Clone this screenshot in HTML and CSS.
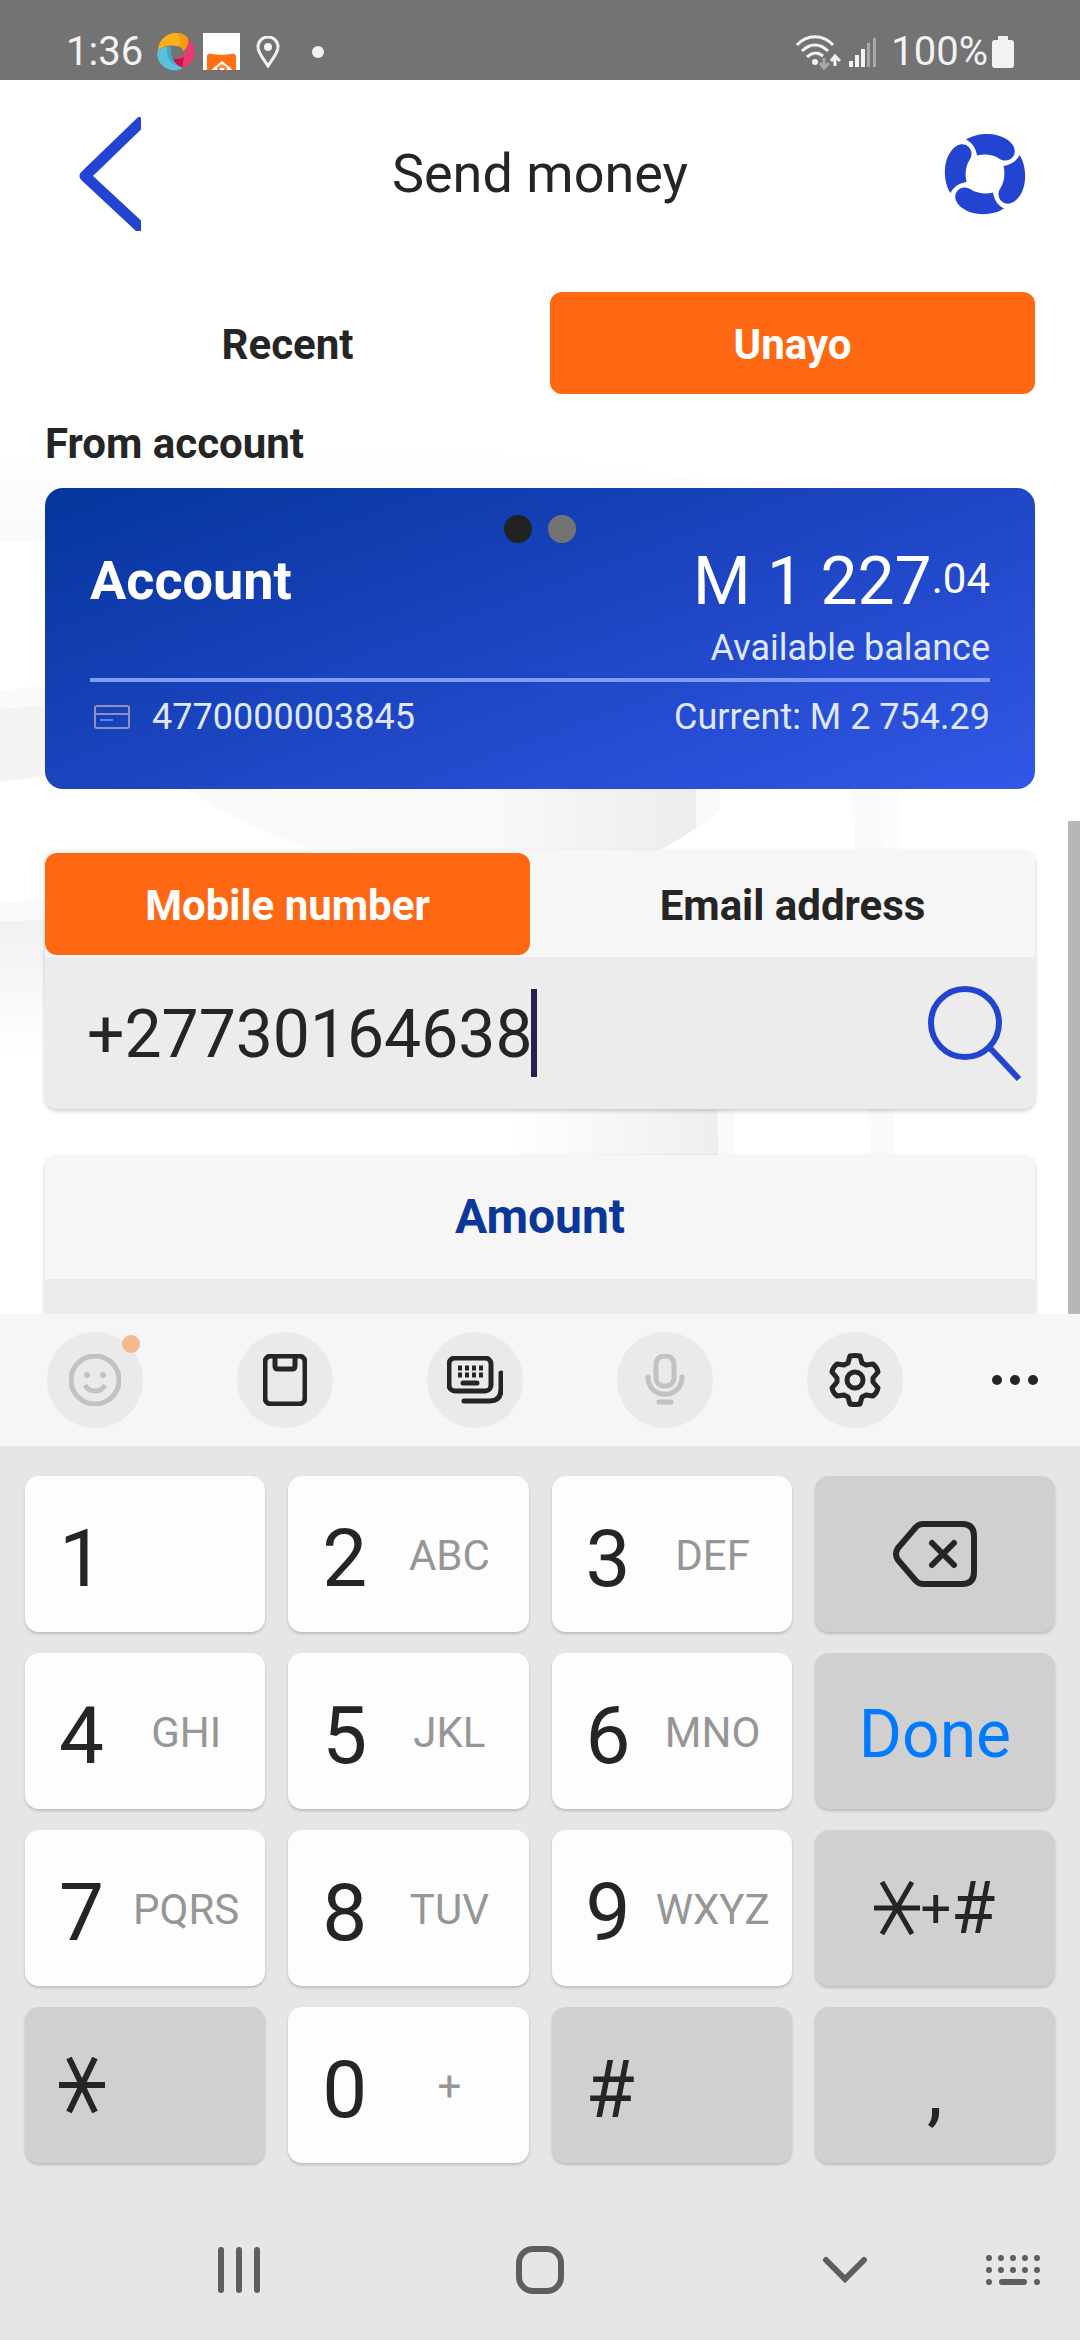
FILE: index.html
```html
<!DOCTYPE html>
<html lang="en">
<head>
<meta charset="utf-8">
<meta name="viewport" content="width=device-width, initial-scale=1">
<title>Send money</title>
<link rel="stylesheet" href="styles.css">
</head>
<body>
<div class="status">
  <div class="status-group">
    <span>1:36</span>
    <svg class="status-ring" width="38" height="38" viewBox="0 0 38 38" aria-hidden="true">
      <path d="M1 17C2 6 10 0 19 0c6 0 11 3 12 6 1 4-1 9-5 12-4-6-14-8-25-1z" fill="#fbb018"/>
      <path d="M20 0c6 0 11 3 11 7s-1 8-5 11l-4-4c2-5 1-10-2-14z" fill="#f99a0c"/>
      <path d="M32 6c5 4 7 12 5 18-3 8-10 12-14 11-6-1-9-6-9-9 9 2 17-6 18-20z" fill="#ea3a72"/>
      <path d="M14 25c4 2 9 1 13-1l-2 11c-6 1-11-5-11-10z" fill="#c8133f"/>
      <path d="M1 17c4-3 9-4 13-3-1 9 2 17 12 21-6 4-14 3-20-2-5-4-7-11-5-16z" fill="#5cc0dc"/>
      <path d="M10 14h4c-1 8 1 15 7 19-8-2-12-10-11-19z" fill="#3fa6c4"/>
      <circle cx="20" cy="19" r="6" fill="#737373"/>
    </svg>
    <svg class="status-app" width="37" height="37" viewBox="0 0 37 37" aria-hidden="true">
      <rect width="37" height="37" fill="#fff"/>
      <path d="M4 37V25c-1-3 2-5 5-4 4 1 15 1 19 0 3-1 6 1 5 4v12h-4c-1-2-2-3-4-4l-6-5-6 5c-2 1-3 2-4 4z" fill="#ff6f14"/>
      <path d="M14 37v-3l5-3 5 3v3h-3v-2h-4v2z" fill="#ff8f3a"/>
    </svg>
    <svg class="status-pin" width="24" height="32" viewBox="0 0 24 32" aria-hidden="true">
      <path d="M12 30C7 22 2 17 2 11a10 10 0 0 1 20 0c0 6-5 11-10 19z" fill="none" stroke="#f2f2f2" stroke-width="3"/>
      <circle cx="12" cy="11" r="4" fill="#f2f2f2"/>
    </svg>
    <span class="status-dot"></span>
  </div>
  <div class="status-group">
    <svg width="46" height="36" viewBox="0 0 46 36" aria-hidden="true">
      <g fill="none" stroke="#f2f2f2" stroke-width="3">
        <path d="M2 11C12 0 28 0 38 11"/><path d="M7 17c8-8 18-8 26 0"/><path d="M12 23c5-5 11-5 16-1"/>
      </g>
      <circle cx="20" cy="28" r="3" fill="#f2f2f2"/>
      <path d="M29 24v10m-4-5 4 5 5-5" fill="none" stroke="#a9a9a9" stroke-width="3"/>
      <path d="M40 32V22m-4 5 4-5 5 5" fill="none" stroke="#f2f2f2" stroke-width="3"/>
    </svg>
    <svg class="status-signal" width="28" height="32" viewBox="0 0 28 32" aria-hidden="true">
      <path d="M0 25h4v6H0zM6 19h4v12H6zM12 13h4v18h-4z" fill="#f2f2f2"/>
      <path d="M18 7h3v24h-3zM24 2h3v29h-3z" fill="#a9a9a9"/>
    </svg>
    <span>100%</span>
    <svg width="22" height="34" viewBox="0 0 22 34" aria-hidden="true">
      <path d="M6 5V2q0-1 1-1h8q1 0 1 1v3h3q3 0 3 3v22q0 3-3 3H3q-3 0-3-3V8q0-3 3-3z" fill="#f2f2f2"/>
    </svg>
  </div>
</div>

<main class="app">
  <svg class="backdrop" viewBox="0 0 1080 1234" preserveAspectRatio="xMidYMin slice" aria-hidden="true">
    <defs>
      <linearGradient id="fade-down" x1="0" y1="0" x2="0" y2="1"><stop offset="0" stop-color="#f1f1f1"/><stop offset="1" stop-color="#fff"/></linearGradient>
      <linearGradient id="fade-up" x1="0" y1="0" x2="0" y2="1"><stop offset="0" stop-color="#fff"/><stop offset="1" stop-color="#f9f9f9"/></linearGradient>
      <linearGradient id="fade-right" x1="0" y1="0" x2="1" y2="0"><stop offset="0" stop-color="#fafafa"/><stop offset=".6" stop-color="#f9f9f9"/><stop offset="1" stop-color="#ededed"/></linearGradient>
      <linearGradient id="fade-low" x1="0" y1="0" x2="1" y2="0"><stop offset="0" stop-color="#fff"/><stop offset=".5" stop-color="#fff"/><stop offset="1" stop-color="#eee"/></linearGradient>
    </defs>
    <path d="M0 380Q400 340 760 410L800 440 0 462z" fill="url(#fade-up)"/>
    <path d="M0 610l60-5v40L0 630z" fill="#fafafa"/>
    <path d="M0 629l60-5v70L0 702z" fill="#f3f3f3"/>
    <path d="M170 700Q330 800 480 800h110q60-20 106-52V700z" fill="url(#fade-right)"/>
    <path d="M696 690v58l24-16V690z" fill="#fafafa"/>
    <path d="M0 823l60-6v24L0 842z" fill="#fafafa"/>
    <path d="M0 842l60-3v140L0 979z" fill="url(#fade-down)"/>
    <path d="M300 1020H717l2 70H400z" fill="url(#fade-low)"/>
    <path d="M717 1020h18v70h-16z" fill="#fafafa"/>
    <path d="M850 690h30l16 400h-25z" fill="#fafafa"/>
    <path d="M880 690h22l-2 90h-16z" fill="#fcfcfc"/>
  </svg>

  <header class="topbar">
    <button class="icon-button back" aria-label="Back">
      <svg width="62" height="114" viewBox="0 0 62 114"><path d="M64 3 6 59 64 113" fill="none" stroke="#2344d0" stroke-width="11" stroke-linejoin="round"/></svg>
    </button>
    <h1 class="title">Send money</h1>
    <button class="icon-button" aria-label="Help">
      <svg width="82" height="82" viewBox="-41 -41 82 82" fill="#2344d0">
        <defs><path id="lobe" d="M-19-34.500C-8-42 12-42 22-34.500 29-30 31-24 29-19 26-13 19-12 14-15.500 9-19 0-20.500-8-18.500-9-25-12-31-19-34.500Z"/></defs>
        <use href="#lobe"/><use href="#lobe" transform="rotate(90)"/><use href="#lobe" transform="rotate(180)"/><use href="#lobe" transform="rotate(270)"/>
      </svg>
    </button>
  </header>

  <div class="tabs" role="tablist">
    <button class="tab" role="tab" aria-selected="false">Recent</button>
    <button class="tab tab-active" role="tab" aria-selected="true">Unayo</button>
  </div>

  <h2 class="section-label">From account</h2>
  <section class="account">
    <div class="pager" aria-hidden="true"><span class="pager-dot pager-current"></span><span class="pager-dot"></span></div>
    <div class="account-main">
      <span class="account-name">Account</span>
      <span class="balance">M 1 227<span class="cents">.04</span></span>
    </div>
    <div class="available">Available balance</div>
    <div class="account-foot">
      <span class="account-number">
        <svg width="36" height="24" viewBox="0 0 36 24" fill="none" stroke="#8d93b8" stroke-width="2" aria-hidden="true"><rect x="1" y="1" width="34" height="22" rx="2"/><path d="M1 9h34"/><path d="M6 15h13" stroke="#5b83f5"/></svg>
        4770000003845
      </span>
      <span>Current: M 2 754.29</span>
    </div>
  </section>

  <section class="panel">
    <div class="tabs panel-tabs" role="tablist">
      <button class="tab tab-active" role="tab" aria-selected="true">Mobile number</button>
      <button class="tab" role="tab" aria-selected="false">Email address</button>
    </div>
    <div class="field">
      <input class="phone" type="tel" aria-label="Mobile number" value="+27730164638">
      <span class="caret"></span>
      <button class="icon-button search" aria-label="Search">
        <svg width="94" height="96" viewBox="0 0 94 96" fill="none" stroke="#2344d0" stroke-width="6"><circle cx="38" cy="38" r="34"/><path d="M62 62 92 94"/></svg>
      </button>
    </div>
  </section>

  <section class="panel amount">
    <label class="amount-label" for="amount">Amount</label>
    <input class="amount-input" id="amount" type="text" inputmode="decimal">
  </section>
  <div class="scrollbar"></div>
</main>

<div class="keyboard">
  <div class="toolbar">
    <button class="tool tool-muted" aria-label="Emoji">
      <svg width="52" height="52" viewBox="0 0 52 52"><circle cx="26" cy="26" r="24"/><path d="M16 31c4 8 16 8 20 0"/><g fill="currentColor" stroke="none"><circle cx="18" cy="21" r="3"/><circle cx="34" cy="21" r="3"/></g></svg>
      <span class="badge"></span>
    </button>
    <button class="tool" aria-label="Clipboard">
      <svg width="44" height="52" viewBox="0 0 44 52"><rect x="2" y="2" width="40" height="48" rx="6"/><path d="M12 2v10q0 3 3 3h14q3 0 3-3V2"/></svg>
    </button>
    <button class="tool" aria-label="Keyboard modes">
      <svg width="56" height="48" viewBox="0 0 56 48"><rect x="2" y="2" width="42" height="33" rx="6"/><path d="M54 17v16q0 12-11 12H17" stroke-linecap="round"/><path d="M16 27h14" stroke-width="5" stroke-linecap="round"/><path d="M11 12h27M11 19h27" stroke-dasharray="4 3"/></svg>
    </button>
    <button class="tool tool-muted" aria-label="Voice input">
      <svg width="40" height="52" viewBox="0 0 40 52" stroke-linecap="round"><rect x="11" y="2" width="18" height="30" rx="8"/><path d="M3 23c0 23 34 23 34 0M14 48h12"/></svg>
    </button>
    <button class="tool" aria-label="Settings">
      <svg width="52" height="54" viewBox="-26 -27 52 54" stroke-linejoin="round"><path d="M-7-17-5-24Q0-25 5-24L7-17 11-15 18-16Q22-13 23-8L18-2V2L23 8Q22 13 18 16L11 15 7 17 5 24Q0 25-5 24L-7 17-11 15-18 16Q-22 13-23 8L-18 2V-2L-23-8Q-22-13-18-16L-11-15Z"/><circle r="8"/></svg>
    </button>
    <button class="icon-button more" aria-label="More">
      <svg width="46" height="12" viewBox="0 0 46 12" fill="#252525"><circle cx="5" cy="6" r="5"/><circle cx="23" cy="6" r="5"/><circle cx="41" cy="6" r="5"/></svg>
    </button>
  </div>

  <div class="keys">
    <button class="key"><span class="digit">1</span></button>
    <button class="key"><span class="digit">2</span><span class="letters">ABC</span></button>
    <button class="key"><span class="digit">3</span><span class="letters">DEF</span></button>
    <button class="key key-dark key-center" aria-label="Backspace">
      <svg width="86" height="66" viewBox="0 0 86 66" fill="none" stroke="#252525" stroke-width="6" stroke-linejoin="round"><path d="M31 3H70Q82 3 82 15V51Q82 63 70 63H31Q27 63 24 60L6 39Q2 33 6 27L24 6Q27 3 31 3Z"/><path d="M40 22 62 44M62 22 40 44" stroke-linecap="round"/></svg>
    </button>

    <button class="key"><span class="digit">4</span><span class="letters">GHI</span></button>
    <button class="key"><span class="digit">5</span><span class="letters">JKL</span></button>
    <button class="key"><span class="digit">6</span><span class="letters">MNO</span></button>
    <button class="key key-dark key-center done">Done</button>

    <button class="key"><span class="digit">7</span><span class="letters">PQRS</span></button>
    <button class="key"><span class="digit">8</span><span class="letters">TUV</span></button>
    <button class="key"><span class="digit">9</span><span class="letters">WXYZ</span></button>
    <button class="key key-dark key-center" aria-label="Symbols">
      <svg width="46" height="54" viewBox="0 0 46 54" fill="none" stroke="#252525" stroke-width="5" aria-hidden="true"><path d="M0 27h46M8 1l30 52M38 1 8 53"/></svg><span class="plus">+</span><span class="hash">#</span>
    </button>

    <button class="key key-dark" aria-label="Star">
      <svg width="46" height="56" viewBox="0 0 46 56" fill="none" stroke="#252525" stroke-width="6" aria-hidden="true"><path d="M0 28h46M10 1l26 54M36 1 10 55"/></svg>
    </button>
    <button class="key"><span class="digit">0</span><span class="letters">+</span></button>
    <button class="key key-dark"><span class="digit">#</span></button>
    <button class="key key-dark key-center"><span class="digit comma">,</span></button>
  </div>

  <nav class="nav">
    <button class="icon-button" aria-label="Recent apps"><svg width="44" height="48" viewBox="0 0 44 48" stroke="#5e5e5e" stroke-width="6" stroke-linecap="round"><path d="M4 4v40M22 4v40M40 4v40"/></svg></button>
    <button class="icon-button" aria-label="Home"><svg width="50" height="50" viewBox="0 0 50 50" fill="none" stroke="#5e5e5e" stroke-width="6"><rect x="4" y="4" width="42" height="42" rx="14"/></svg></button>
    <button class="icon-button nav-hide" aria-label="Hide keyboard"><svg width="46" height="30" viewBox="0 0 46 30" fill="none" stroke="#5e5e5e" stroke-width="6" stroke-linecap="round"><path d="M4 5 23 24 42 5"/></svg></button>
    <button class="icon-button" aria-label="Change keyboard"><svg width="56" height="32" viewBox="0 0 56 32" fill="none" stroke="#5e5e5e" stroke-width="6" stroke-linecap="round"><path d="M4 4h48.100M4 16h48.100" stroke-dasharray="0 12"/><path d="M4 28h0M17 28h22M52 28h0"/></svg></button>
  </nav>
</div>
</body>
</html>
```
FILE: styles.css
```css
* {
  box-sizing: border-box;
}

body {
  margin: 0;
  height: 100vh;
  display: flex;
  flex-direction: column;
  background: #fff;
  color: #252525;
  font-family: Roboto, "Liberation Sans", sans-serif;
}

button,
input {
  border: 0;
  padding: 0;
  margin: 0;
  background: none;
  color: inherit;
  font: inherit;
}

input {
  outline: 0;
}

svg {
  display: block;
  flex: none;
}

.icon-button {
  display: flex;
  align-items: center;
  justify-content: center;
}

/* Status bar */
.status {
  flex: none;
  height: 80px;
  padding: 23px 66px 0;
  display: flex;
  justify-content: space-between;
  align-items: center;
  background: #737373;
  color: #f2f2f2;
  font-size: 40px;
}

.status-group {
  display: flex;
  align-items: center;
}

.status-ring {
  margin-left: 14px;
}

.status-app {
  margin: 0 16px 0 8px;
}

.status-dot {
  width: 12px;
  height: 12px;
  margin-left: 32px;
  border-radius: 50%;
  background: #f2f2f2;
}

.status-signal {
  margin: 0 14px 0 8px;
}

.status-group span + svg:last-child {
  margin-left: 4px;
}

/* App */
.app {
  position: relative;
  flex: 1;
  min-height: 0;
  overflow: hidden;
  padding: 0 45px;
}

.app > * {
  position: relative;
}

.app > .backdrop {
  position: absolute;
  inset: 0;
  width: 100%;
  height: 100%;
}

.topbar {
  height: 187px;
  padding: 0 9px 0 34px;
  display: grid;
  grid-template-columns: 82px 1fr 82px;
  align-items: center;
}

.back {
  justify-content: flex-start;
}

.title {
  margin: 0;
  padding-right: 25px;
  font-size: 54px;
  font-weight: 400;
  text-align: center;
}

.tabs {
  display: grid;
  grid-template-columns: 1fr 1fr;
  gap: 20px;
  margin-top: 25px;
}

.tab {
  height: 102px;
  padding-top: 2px;
  border-radius: 12px;
  font-size: 42px;
  font-weight: 700;
}

.tab-active {
  background: #ff6813;
  color: #fff;
}

.section-label {
  margin: 0;
  padding: 26px 0 20px;
  font-size: 42px;
  line-height: 48px;
}

.account {
  padding: 52px 45px 48px;
  border-radius: 18px;
  background: linear-gradient(160deg, #05359c, #1d45c2 50%, #3257e8);
  color: #fff;
}

.pager {
  position: absolute;
  top: 27px;
  left: 0;
  right: 0;
  display: flex;
  justify-content: center;
  gap: 16px;
}

.pager-dot {
  width: 28px;
  height: 28px;
  border-radius: 50%;
  background: #737373;
}

.pager-current {
  background: #222;
}

.account-main {
  height: 84px;
  display: flex;
  align-items: center;
  justify-content: space-between;
}

.account-name {
  padding-bottom: 4px;
  font-size: 54px;
  font-weight: 700;
}

.balance {
  font-size: 66px;
  line-height: 84px;
}

.cents {
  font-size: 42px;
  line-height: 42px;
  vertical-align: 11px;
}

.available {
  padding-bottom: 6px;
  border-bottom: 4px solid #7f9df8;
  color: #dfe8ff;
  font-size: 36px;
  line-height: 48px;
  text-align: right;
}

.account-foot {
  margin-top: 11px;
  display: flex;
  justify-content: space-between;
  color: #dfe8ff;
  font-size: 36px;
  line-height: 48px;
}

.account-number {
  display: flex;
  align-items: center;
  gap: 22px;
  padding-left: 4px;
}

.panel {
  margin-top: 61px;
  border-radius: 12px;
  overflow: hidden;
  background: #f6f6f6;
  box-shadow: 0 2px 4px rgba(0, 0, 0, 0.2);
}

.panel-tabs {
  margin: 0;
  padding: 3px 0 2px;
}

.field {
  height: 152px;
  padding: 0 14px 0 42px;
  display: flex;
  align-items: center;
  background: #ececec;
}

.phone {
  width: 444px;
  padding-top: 2px;
  font-size: 66px;
}

.caret {
  width: 6px;
  height: 88px;
  background: #26214f;
}

.search {
  margin-left: auto;
}

.amount {
  margin-top: 46px;
}

.amount-label {
  display: block;
  color: #0b3799;
  font-size: 48px;
  font-weight: 700;
  line-height: 124px;
  text-align: center;
}

.amount-input {
  display: block;
  width: 100%;
  height: 152px;
  background: #ececec;
}

.app > .scrollbar {
  position: absolute;
  top: 741px;
  right: 0;
  bottom: 0;
  width: 12px;
  background: #b7b7b7;
}

/* Keyboard */
.keyboard {
  flex: none;
  background: #e6e6e6;
}

.toolbar {
  height: 132px;
  padding: 0 47px;
  display: flex;
  align-items: center;
  justify-content: space-between;
  background: #f6f6f6;
}

.tool {
  position: relative;
  width: 96px;
  height: 96px;
  display: flex;
  align-items: center;
  justify-content: center;
  border-radius: 50%;
  background: #eaeaea;
  color: #252525;
}

.tool-muted {
  color: #c2c2c2;
}

.tool svg {
  fill: none;
  stroke: currentColor;
  stroke-width: 5px;
}

.more {
  width: 36px;
}

.badge {
  position: absolute;
  top: 3px;
  right: 3px;
  width: 18px;
  height: 18px;
  border-radius: 50%;
  background: #f5b98f;
}

.keys {
  padding: 30px 25px 0;
  display: grid;
  grid-template-columns: repeat(4, 1fr);
  gap: 21px 23px;
}

.key {
  height: 156px;
  padding-left: 34px;
  display: flex;
  align-items: center;
  border-radius: 14px;
  background: #fdfdfd;
  box-shadow: 0 2px 3px rgba(0, 0, 0, 0.18);
}

.key-dark {
  background: #d0d0d0;
}

.key-center {
  padding-left: 0;
  justify-content: center;
}

.digit {
  width: 48px;
  padding-top: 9px;
  font-size: 80px;
  text-align: left;
}

.comma {
  width: auto;
}

.letters {
  flex: 1;
  padding-top: 2px;
  color: #969696;
  font-size: 42px;
  text-align: center;
}

.done {
  padding-top: 7px;
  color: #007bff;
  font-size: 66px;
}

.plus {
  font-size: 54px;
}

.hash {
  font-size: 72px;
}

.nav {
  height: 177px;
  padding-top: 37px;
  display: grid;
  grid-template-columns: 478fr 124fr 142fr 201fr 135fr;
  align-items: center;
}

.nav-hide {
  grid-column: 4;
}
```
